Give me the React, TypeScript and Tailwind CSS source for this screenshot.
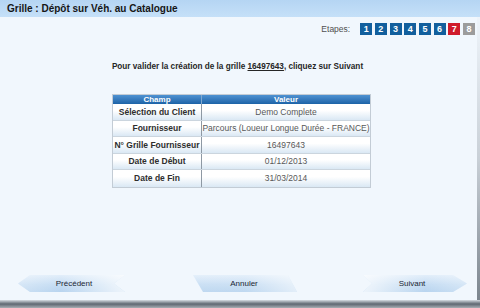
import React from "react";

const rows: [string, string][] = [
  ["Sélection du Client", "Demo Complete"],
  ["Fournisseur", "Parcours (Loueur Longue Durée - FRANCE)"],
  ["N° Grille Fournisseur", "16497643"],
  ["Date de Début", "01/12/2013"],
  ["Date de Fin", "31/03/2014"],
];

const steps = [
  { n: "1", c: "bg-[#125f9d]" },
  { n: "2", c: "bg-[#125f9d]" },
  { n: "3", c: "bg-[#125f9d]" },
  { n: "4", c: "bg-[#125f9d]" },
  { n: "5", c: "bg-[#125f9d]" },
  { n: "6", c: "bg-[#125f9d]" },
  { n: "7", c: "bg-[#cf1b2b]" },
  { n: "8", c: "bg-[#9c9c9c]" },
];

function Grad({ id, dir }: { id: string; dir: "l" | "r" | "n" }) {
  return (
    <defs>
      <linearGradient id={id + "v"} x1="0" y1="0" x2="0" y2="1">
        <stop offset="0" stopColor="#e2eefa" />
        <stop offset="0.55" stopColor="#c6ddf3" />
        <stop offset="1" stopColor="#b8d4ef" />
      </linearGradient>
      <linearGradient id={id + "h"} x1="0" y1="0" x2="1" y2="0">
        {dir === "l" ? (
          <>
            <stop offset="0" stopColor="#ffffff" stopOpacity="0.3" />
            <stop offset="0.4" stopColor="#ffffff" stopOpacity="0" />
            <stop offset="1" stopColor="#ffffff" stopOpacity="0.75" />
          </>
        ) : dir === "r" ? (
          <>
            <stop offset="0" stopColor="#ffffff" stopOpacity="0.75" />
            <stop offset="0.6" stopColor="#ffffff" stopOpacity="0" />
            <stop offset="1" stopColor="#ffffff" stopOpacity="0.3" />
          </>
        ) : (
          <>
            <stop offset="0" stopColor="#ffffff" stopOpacity="0.1" />
            <stop offset="0.5" stopColor="#ffffff" stopOpacity="0.1" />
            <stop offset="1" stopColor="#ffffff" stopOpacity="0.6" />
          </>
        )}
      </linearGradient>
    </defs>
  );
}

function Btn({
  label,
  points,
  w,
  id,
  dir,
  cls,
}: {
  label: string;
  points: string;
  w: number;
  id: string;
  dir: "l" | "r" | "n";
  cls: string;
}) {
  return (
    <div className={"relative h-[17px] flex items-center justify-center " + cls}>
      <svg className="absolute inset-0" width={w} height={17} viewBox={`0 0 ${w} 17`}>
        <Grad id={id} dir={dir} />
        <polygon points={points} fill={`url(#${id}v)`} />
        <polygon points={points} fill={`url(#${id}h)`} />
      </svg>
      <span className="relative text-[8px] text-[#1b2633] leading-none">{label}</span>
    </div>
  );
}

export default function App() {
  return (
    <div className="w-[480px] h-[308px] flex flex-col bg-[#f1f7fd] overflow-hidden font-['Liberation_Sans',Arial,sans-serif]">
      <div className="h-[17px] shrink-0 flex items-center pl-[7px] bg-linear-to-b from-[#b5d5f3] to-[#c5e0f8]">
        <span className="text-[10px] font-bold text-[#161616] leading-none">
          Grille : Dépôt sur Véh. au Catalogue
        </span>
      </div>
      <div className="flex-1 flex">
        <div className="flex-1 flex flex-col">
          <div className="mt-[6px] h-[12px] flex items-center justify-end pr-[2px]">
            <span className="text-[8.5px] text-[#505050] mr-[10px] leading-none">Etapes:</span>
            <div className="flex gap-[2.7px]">
              {steps.map((s) => (
                <div
                  key={s.n}
                  className={
                    "w-[12px] h-[12px] flex items-center justify-center text-white text-[9px] font-bold leading-none " +
                    s.c
                  }
                >
                  {s.n}
                </div>
              ))}
            </div>
          </div>
          <div className="mt-[26px] h-[12px] pr-[2px] text-center text-[8.2px] font-bold text-[#262626] leading-[12px]">
            Pour valider la création de la grille <span className="underline">16497643</span>, cliquez sur Suivant
          </div>
          <div className="mt-[21px] ml-[112px] w-[259px] border border-[#c3ccd5]">
            <div className="h-[9px] flex bg-linear-to-b from-[#4f92d2] to-[#1c63a7] text-white text-[8px] font-bold leading-none">
              <div className="w-[89px] flex items-center justify-center border-r border-[#7fa8d0]">Champ</div>
              <div className="flex-1 flex items-center justify-center">Valeur</div>
            </div>
            {rows.map(([k, v], i) => (
              <div
                key={k}
                className={
                  "h-[16.5px] flex bg-linear-to-b from-white from-40% to-[#dae8f4] " +
                  (i < rows.length - 1 ? "border-b border-[#cbd5de]" : "")
                }
              >
                <div className="w-[89px] flex items-center justify-center border-r border-[#8e99a4] text-[8.5px] font-bold text-[#2e2e2e] leading-none whitespace-nowrap">
                  {k}
                </div>
                <div className="flex-1 flex items-center justify-center text-[8.5px] text-[#585858] leading-none whitespace-nowrap">
                  {v}
                </div>
              </div>
            ))}
          </div>
          <div className="mt-auto mb-[8px] flex">
            <Btn
              label="Précédent"
              id="bp"
              dir="l"
              w={107}
              cls="ml-[18px] w-[107px] pl-[5px]"
              points="0,8.5 12,0 107,0 96,8.5 107,17 12,17"
            />
            <Btn
              label="Annuler"
              id="ba"
              dir="n"
              w={104}
              cls="ml-[68px] w-[104px] pr-[2px]"
              points="0,0 95,0 104,17 10,17"
            />
            <Btn
              label="Suivant"
              id="bs"
              dir="r"
              w={104}
              cls="ml-[66px] w-[104px] pr-[6px]"
              points="0,0 90,0 104,8.5 90,17 0,17 9,8.5"
            />
          </div>
        </div>
        <div className="w-[3px] bg-linear-to-b from-[#eef4fa] via-[#c9d0d7] to-[#7c858e]" />
      </div>
      <div className="h-[8px] shrink-0 bg-linear-to-b from-[#d7dde3] via-[#5f6872] to-[#a9afb5]" />
    </div>
  );
}
